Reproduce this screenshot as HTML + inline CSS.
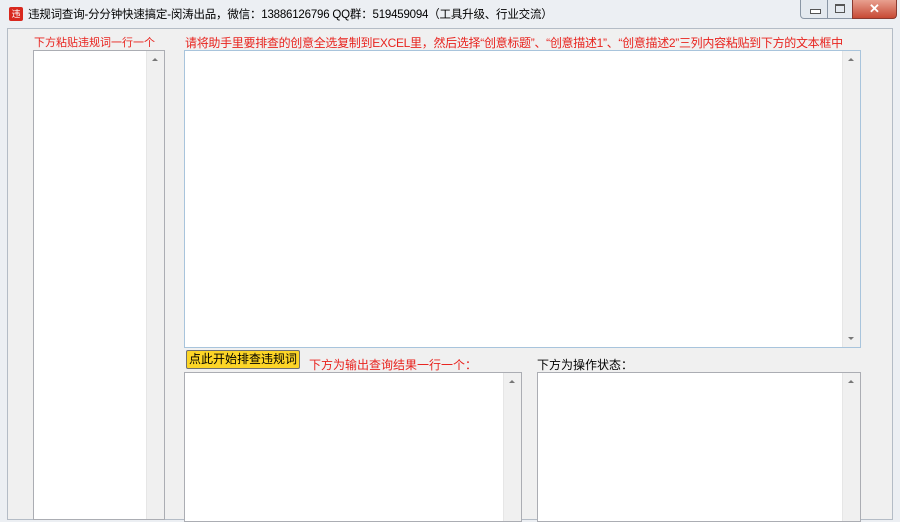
<!DOCTYPE html><html><head><meta charset="utf-8"><style>
body{margin:0;width:900px;height:511px;overflow:hidden;background:#eceff3;font-family:"Liberation Sans","Noto Sans CJK SC",sans-serif;position:relative}
.a{position:absolute}
.title{left:28px;top:6px;font-size:11.5px;color:#000;letter-spacing:-0.2px}
.client{left:7px;top:28px;width:884px;height:490px;background:#f0f0f0;border:1px solid #b4bcc6}
.box{background:#fff;border:1px solid #abadb3;box-sizing:border-box}
.sb{position:absolute;right:0;top:0;bottom:0;width:17px;background:#f0f0f0;border-left:1px solid #e6e6e6}
.sb:before{content:"";position:absolute;left:5px;top:7px;border:3px solid transparent;border-bottom:3px solid #777;border-top:0}
.sb.d:after{content:"";position:absolute;left:5px;bottom:7px;border:3px solid transparent;border-top:3px solid #777;border-bottom:0}
.red{color:#e8231e;font-size:12px;white-space:nowrap}
</style></head><body>
<div class="a" style="left:9px;top:7px;width:14px;height:14px;background:#d8281e;border-radius:2px;color:#fff;font-size:9px;line-height:14px;text-align:center">违</div>
<div class="a title">违规词查询-分分钟快速搞定-闵涛出品，微信：13886126796 QQ群：519459094（工具升级、行业交流）</div>
<div class="a" style="left:800px;top:0;width:26px;height:18px;border:1px solid #8a96a5;border-top:0;border-radius:0 0 0 4px;background:#e4e9ef"><div class="a" style="left:9px;top:9px;width:9px;height:3px;border:1px solid #555;background:#fff"></div></div>
<div class="a" style="left:827px;top:0;width:24px;height:18px;border:1px solid #8a96a5;border-top:0;background:#e4e9ef"><div class="a" style="left:7px;top:4px;width:8px;height:6px;border:1px solid #555;border-top-width:2px"></div></div>
<div class="a" style="left:852px;top:0;width:43px;height:18px;border:1px solid #8a3a30;border-top:0;border-radius:0 0 4px 0;background:linear-gradient(#e8a090,#c74a35);color:#fff;font-size:13px;font-weight:bold;text-align:center;line-height:17px">✕</div>
<div class="a client"></div>
<div class="a red" style="left:34px;top:34px;font-size:11px">下方粘贴违规词一行一个</div>
<div class="a red" style="left:185px;top:34px;letter-spacing:-0.3px">请将助手里要排查的创意全选复制到EXCEL里，然后选择“创意标题”、“创意描述1”、“创意描述2”三列内容粘贴到下方的文本框中</div>
<div class="a box" style="left:33px;top:50px;width:132px;height:470px"><div class="sb"></div></div>
<div class="a box" style="left:184px;top:50px;width:677px;height:298px;border-color:#a8c4dc"><div class="sb d"></div></div>
<div class="a" style="left:186px;top:350px;width:114px;height:19px;box-sizing:border-box;border:1px solid #707070;border-radius:2px;background:#fcd526;font-size:12px;text-align:center;line-height:17px">点此开始排查违规词</div>
<div class="a red" style="left:309px;top:356px">下方为输出查询结果一行一个：</div>
<div class="a" style="left:537px;top:356px;font-size:12px">下方为操作状态：</div>
<div class="a box" style="left:184px;top:372px;width:338px;height:150px"><div class="sb"></div></div>
<div class="a box" style="left:537px;top:372px;width:324px;height:150px"><div class="sb"></div></div>
</body></html>
